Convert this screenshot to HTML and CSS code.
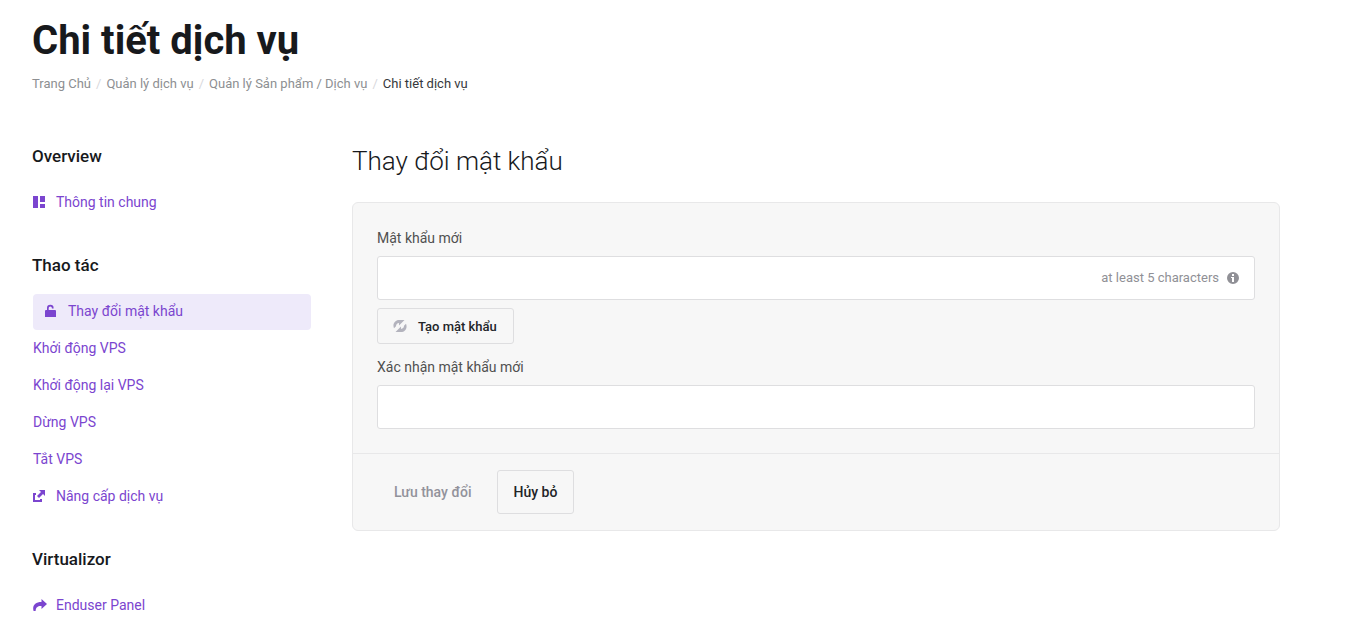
FILE: index.html
```html
<!DOCTYPE html>
<html lang="vi">
  <head>
    <meta charset="UTF-8" />
    <meta name="viewport" content="width=device-width, initial-scale=1.0" />
    <title>Chi tiết dịch vụ</title>
    <link rel="stylesheet" href="styles.css">
  </head>
  <body>
    <div class="container">
      <header class="page-header">
        <h1>Chi tiết dịch vụ</h1>
        <nav aria-label="Breadcrumb">
          <ol class="breadcrumb">
            <li><a href="#">Trang Chủ</a></li>
            <li><a href="#">Quản lý dịch vụ</a></li>
            <li><a href="#">Quản lý Sản phẩm / Dịch vụ</a></li>
            <li class="current">Chi tiết dịch vụ</li>
          </ol>
        </nav>
      </header>

      <div class="layout">
        <!-- Sidebar -->
        <aside class="sidebar">
          <section class="menu">
            <h3>Overview</h3>
            <ul>
              <li>
                <a href="#">
                  <svg class="icon" viewBox="0 0 14 14"><path d="M0 1h5v12H0zM7 1h5v6H7zM7 9h5v4H7z" /></svg>
                  <span>Thông tin chung</span>
                </a>
              </li>
            </ul>
          </section>

          <section class="menu">
            <h3>Thao tác</h3>
            <ul>
              <li>
                <a href="#" class="active">
                  <svg class="icon" viewBox="0 0 14 14"><path d="M1 6h1V4a3.300 3.300 0 0 1 6.600 0v.5H6.900V4a1.600 1.600 0 0 0-3.200 0v2H10a1 1 0 0 1 1 1v6H0V7a1 1 0 0 1 1-1z" /></svg>
                  <span>Thay đổi mật khẩu</span>
                </a>
              </li>
              <li><a href="#">Khởi động VPS</a></li>
              <li><a href="#">Khởi động lại VPS</a></li>
              <li><a href="#">Dừng VPS</a></li>
              <li><a href="#">Tắt VPS</a></li>
              <li>
                <a href="#">
                  <svg class="icon" viewBox="0 0 14 14"><path d="M0 4h3v2H2v5h5v-1h2v3H0zM6 1h6v6l-2-2-4 4-2-2 4-4z" /></svg>
                  <span>Nâng cấp dịch vụ</span>
                </a>
              </li>
            </ul>
          </section>

          <section class="menu">
            <h3>Virtualizor</h3>
            <ul>
              <li>
                <a href="#">
                  <svg class="icon" viewBox="0 0 14 14"><path d="M8.500 1l5.500 5-5.500 5V8C5 7.700 2.800 9 2.600 13H.6C-1 8 2 4 8.500 4z" /></svg>
                  <span>Enduser Panel</span>
                </a>
              </li>
            </ul>
          </section>
        </aside>

        <!-- Change password -->
        <main class="content">
          <h2>Thay đổi mật khẩu</h2>
          <form class="panel">
            <div class="panel-body">
              <label for="newPassword">Mật khẩu mới</label>
              <div class="input-group">
                <input type="password" id="newPassword" aria-describedby="passwordHint" />
                <span class="hint" id="passwordHint">
                  at least 5 characters
                  <svg class="icon" viewBox="0 0 14 14"><path fill-rule="evenodd" d="M7 1a6 6 0 1 1 0 12A6 6 0 0 1 7 1zM6 3v2h2V3zM5 6v1h1v4h2V6z" /></svg>
                </span>
              </div>
              <button type="button" class="btn btn-small">
                <svg class="icon" viewBox="0 0 14 14"><path d="M11.500 1L6 6.500V4C4.200 4.200 3 5.500 3 7.200L1 9.200C-.8 5 2 1 6 1zM2.500 13L8 7.500V10c1.800-.2 3-1.500 3-3.200l2-2C14.800 9 12 13 8 13z" /></svg>
                Tạo mật khẩu
              </button>
              <label for="confirmPassword">Xác nhận mật khẩu mới</label>
              <div class="input-group">
                <input type="password" id="confirmPassword" />
              </div>
            </div>
            <div class="panel-footer">
              <button type="submit" class="btn btn-save" disabled>Lưu thay đổi</button>
              <button type="reset" class="btn">Hủy bỏ</button>
            </div>
          </form>
        </main>
      </div>
    </div>
  </body>
</html>
```
FILE: styles.css
```css
* {
  box-sizing: border-box;
}
body {
  margin: 0;
  font-family: Roboto, sans-serif;
  font-size: 14px;
  line-height: 20px;
  color: #505050;
  background-color: #fff;
}
h1,
h2,
h3 {
  margin: 0;
  color: #17191c;
}
h1 {
  font-size: 40px;
  line-height: 50px;
  font-weight: 700;
}
h2 {
  font-size: 26px;
  line-height: 34px;
  font-weight: 300;
}
h3 {
  font-size: 17px;
  line-height: 24px;
  font-weight: 500;
}
ul,
ol {
  list-style: none;
  margin: 0;
  padding: 0;
}
a {
  color: inherit;
  text-decoration: none;
}
.container {
  max-width: 1280px;
  padding: 16px 0 16px 32px;
}
.breadcrumb {
  display: flex;
  flex-wrap: wrap;
  margin-top: 8px;
  font-size: 13px;
  color: #8d8f92;
}
.breadcrumb li + li::before {
  content: '/';
  padding: 0 5px;
  color: #d8d8dc;
}
.breadcrumb .current {
  color: #36383b;
}
.layout {
  display: flex;
  gap: 40px;
  margin-top: 50px;
}
.sidebar {
  flex: 0 0 280px;
}
.menu {
  margin-bottom: 32px;
}
.menu ul {
  margin-top: 16px;
}
.menu li {
  padding: 1px 1px 0;
}
.menu a {
  display: flex;
  align-items: center;
  gap: 9px;
  min-height: 36px;
  padding-bottom: 2px;
  color: #7b45cf;
  border-radius: 4px;
}
.menu a.active {
  padding: 0 12px 2px;
  background-color: #eeeafa;
}
.icon {
  flex: none;
  width: 14px;
  height: 14px;
  fill: currentColor;
}
.content {
  flex: 1;
  min-width: 0;
}
.panel {
  margin-top: 24px;
  border: 1px solid #e8e8e9;
  border-radius: 6px;
  background-color: #f7f7f7;
}
.panel-body {
  padding: 25px 24px 24px;
}
.panel-body label {
  display: block;
  margin-bottom: 8px;
}
.input-group {
  display: flex;
  align-items: center;
  height: 44px;
  border: 1px solid #dedee0;
  border-radius: 3px;
  background-color: #fff;
}
.input-group input {
  flex: 1;
  min-width: 0;
  height: 100%;
  padding: 0 16px;
  border: none;
  outline: none;
  background: none;
  font: inherit;
}
.hint {
  display: flex;
  align-items: center;
  gap: 7px;
  padding-right: 14px;
  font-size: 13px;
  color: #909096;
}
.btn {
  display: inline-flex;
  align-items: center;
  height: 44px;
  padding: 0 16px;
  border: 1px solid #dedee0;
  border-radius: 3px;
  background-color: transparent;
  font-family: inherit;
  font-size: 14px;
  font-weight: 500;
  color: #222428;
  cursor: pointer;
}
.btn-small {
  gap: 11px;
  height: 36px;
  margin: 8px 0 13px;
  padding: 0 16px 0 15px;
  font-size: 13px;
}
.btn-small .icon {
  color: #b3b3bd;
}
.btn-save {
  border-color: transparent;
  color: #92929b;
  cursor: default;
}
.panel-footer {
  display: flex;
  gap: 8px;
  padding: 16px 24px;
  border-top: 1px solid #e8e8e9;
}
```
